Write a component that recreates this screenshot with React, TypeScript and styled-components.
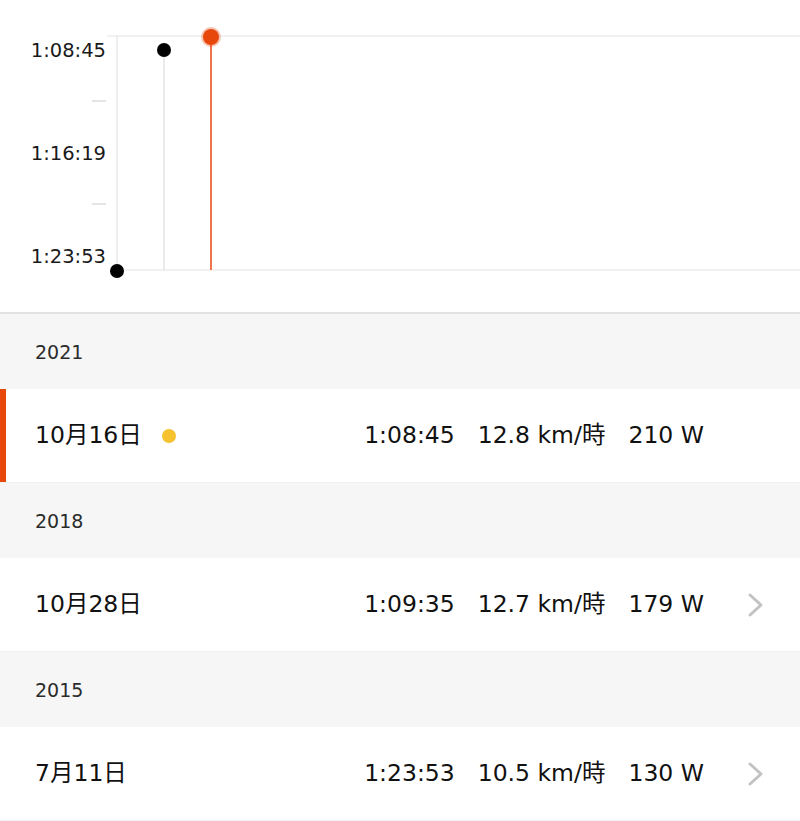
import React from "react";
import styled, { createGlobalStyle } from "styled-components";

const GlobalStyle = createGlobalStyle`
  * { box-sizing: border-box; }
  body {
    margin: 0;
    background: #ffffff;
    font-family: "DejaVu Sans", "Noto Sans CJK JP", sans-serif;
    color: #111111;
  }
`;

const ACCENT = "#e8470c";

const Page = styled.div`
  width: 800px;
  display: flex;
  flex-direction: column;
`;

const ChartSection = styled.section`
  height: 314px;
  border-bottom: 2px solid #e2e2e2;
  background: #ffffff;
`;

const ChartSvg = styled.svg`
  display: block;
`;

const AxisLabel = styled.text`
  font-family: "DejaVu Sans", sans-serif;
  font-size: 19.5px;
  fill: #1a1a1a;
`;

const YearHeader = styled.div`
  height: 75px;
  display: flex;
  align-items: center;
  padding-left: 35px;
  background: #f6f6f6;
  font-size: 19px;
  color: #2b2b2b;
`;

const Row = styled.div<{ $selected?: boolean }>`
  position: relative;
  height: 94px;
  display: flex;
  align-items: center;
  padding: 0 36px 0 35px;
  background: #ffffff;
  border-bottom: 1px solid #f0f0f0;
  &::before {
    content: "";
    position: absolute;
    left: 0;
    top: 0;
    bottom: 0;
    width: 6px;
    background: ${(p) => (p.$selected ? ACCENT : "transparent")};
  }
`;

const DateText = styled.div`
  font-size: 23.5px;
  line-height: 1;
  display: flex;
  align-items: center;
`;

const NewDot = styled.span`
  width: 14px;
  height: 14px;
  margin-left: 20px;
  border-radius: 50%;
  background: #f6c22f;
`;

const Stats = styled.div`
  margin-left: auto;
  display: flex;
  align-items: baseline;
  gap: 23px;
  font-size: 23.5px;
  line-height: 1;
`;

const Chevron = styled.div<{ $hidden?: boolean }>`
  width: 17px;
  margin-left: 43px;
  display: flex;
  align-items: center;
  visibility: ${(p) => (p.$hidden ? "hidden" : "visible")};
`;

interface Effort {
  year: string;
  date: string;
  time: string;
  speed: string;
  power: string;
  selected?: boolean;
  isNew?: boolean;
}

const efforts: Effort[] = [
  { year: "2021", date: "10月16日", time: "1:08:45", speed: "12.8 km/時", power: "210 W", selected: true, isNew: true },
  { year: "2018", date: "10月28日", time: "1:09:35", speed: "12.7 km/時", power: "179 W" },
  { year: "2015", date: "7月11日", time: "1:23:53", speed: "10.5 km/時", power: "130 W" },
];

const Chart: React.FC = () => (
  <ChartSvg width={800} height={312} viewBox="0 0 800 312">
    <line x1={107} y1={36} x2={800} y2={36} stroke="#e3e3e3" strokeWidth={1.2} />
    <line x1={117} y1={270} x2={800} y2={270} stroke="#e3e3e3" strokeWidth={1.2} />
    <line x1={117} y1={36} x2={117} y2={270} stroke="#e3e3e3" strokeWidth={1.2} />
    <line x1={164} y1={50} x2={164} y2={270} stroke="#dedede" strokeWidth={1.2} />
    <line x1={211} y1={37} x2={211} y2={270} stroke={ACCENT} strokeWidth={1.5} />
    <line x1={92} y1={101} x2={106} y2={101} stroke="#dcdcdc" strokeWidth={1.5} />
    <line x1={92} y1={204} x2={106} y2={204} stroke="#dcdcdc" strokeWidth={1.5} />
    <AxisLabel x={106} y={57} textAnchor="end">1:08:45</AxisLabel>
    <AxisLabel x={106} y={160} textAnchor="end">1:16:19</AxisLabel>
    <AxisLabel x={106} y={263} textAnchor="end">1:23:53</AxisLabel>
    <circle cx={164} cy={50} r={7} fill="#000" />
    <circle cx={117} cy={271} r={7} fill="#000" />
    <circle cx={211} cy={37} r={10} fill={ACCENT} opacity={0.3} />
    <circle cx={211} cy={37} r={8} fill={ACCENT} />
  </ChartSvg>
);

const App: React.FC = () => (
  <Page>
    <GlobalStyle />
    <ChartSection>
      <Chart />
    </ChartSection>
    {efforts.map((e) => (
      <React.Fragment key={e.year}>
        <YearHeader>{e.year}</YearHeader>
        <Row $selected={e.selected}>
          <DateText>
            {e.date}
            {e.isNew && <NewDot />}
          </DateText>
          <Stats>
            <span>{e.time}</span>
            <span>{e.speed}</span>
            <span>{e.power}</span>
          </Stats>
          <Chevron $hidden={e.selected}>
            <svg width="17" height="26" viewBox="0 0 17 26">
              <polyline
                points="3,3 14,13 3,23"
                fill="none"
                stroke="#c2c2c2"
                strokeWidth={3}
                strokeLinecap="round"
                strokeLinejoin="round"
              />
            </svg>
          </Chevron>
        </Row>
      </React.Fragment>
    ))}
  </Page>
);

export default App;
